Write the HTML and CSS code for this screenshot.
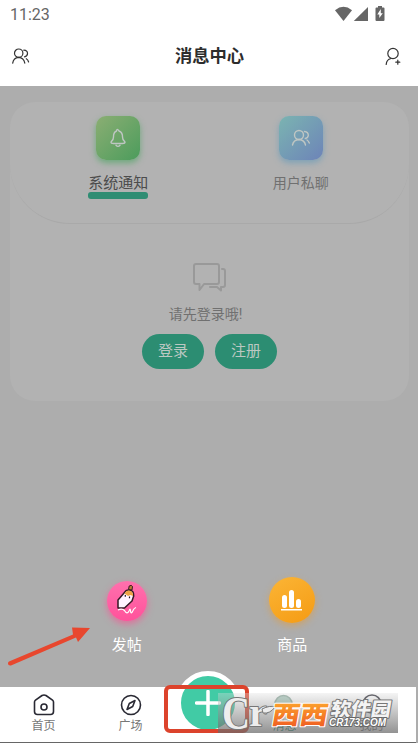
FILE: index.html
```html
<!DOCTYPE html>
<html lang="zh-CN">
<head>
<meta charset="utf-8">
<title>消息中心</title>
<link rel="stylesheet" href="styles.css">
</head>
<body>
<div class="app">
  <header class="header">
    <div class="status">
      <span>11:23</span>
      <svg class="status-icons" width="52" height="17" viewBox="0 0 52 17" fill="#666">
        <path d="M0 4.200Q8.500-2.500 17 4.200L8.500 15Z"/><path d="M33 1V15H18.800Z"/>
        <path d="M43 1.500V0h4v1.500h1.500q1 0 1 1V14q0 1-1 1h-7q-1 0-1-1V2.500q0-1 1-1Z"/>
        <path d="M45.800 3v4.200h2L44.300 12V8.500h-2Z" fill="#fff"/>
      </svg>
    </div>
    <div class="titlebar">
      <svg width="18" height="17" viewBox="0 0 18 17" class="line dark"><circle cx="6.700" cy="5.200" r="4.200"/><path d="M.7 15.200Q1.500 9.800 6.700 9.400Q11.800 9.800 12.800 15.200M11.800 2.200Q15.500 2.500 15.500 5.500Q15.500 8.200 12.500 8.800M14.300 10.700Q16 11.600 16.600 14"/></svg>
      <h1>消息中心</h1>
      <svg width="18" height="19" viewBox="0 0 18 19" class="line dark"><circle cx="8" cy="6.500" r="5.200"/><path d="M1.200 17.500Q1.500 12.500 6 11.500M12.800 13.200v4M10.800 15.200h4"/></svg>
    </div>
  </header>
  <main class="main">
    <section class="card">
      <div class="tabs">
        <div class="tab active">
          <div class="tile green"><svg width="18" height="20" viewBox="0 0 18 20" class="line pale"><path d="M7.500 3Q8-.2 10 3Q13.700 4.500 13.500 9Q13.400 12 16 14Q16 15.500 13.500 15.500H4.500Q2 15.500 2 14Q4.600 12 4.500 9Q4.300 4.500 7.500 3M7 17.300Q9 19.500 11 17.300"/></svg></div>
          <span>系统通知</span>
          <i class="underline"></i>
        </div>
        <div class="tab">
          <div class="tile blue"><svg width="20" height="18" viewBox="0 0 20 18" class="line pale"><circle cx="8" cy="6" r="4.500"/><path d="M1.500 16Q2.500 10.800 8 10.500Q13.500 11 14.500 16M13.500 2.500Q17.500 3 17.300 6.500Q17 9 14.300 9.500M16 11Q17.500 12 18.300 14"/></svg></div>
          <span>用户私聊</span>
        </div>
      </div>
      <div class="empty">
        <svg width="34" height="30" viewBox="0 0 34 30"><path d="M3 1H24Q26 1 26 3V19Q26 21 24 21H11L6.500 27V21H3Q1 21 1 19V3Q1 1 3 1ZM29 6H30Q32 6 32 8V22Q32 24 30 24H28V27.500L24 24H17"/></svg>
        <p>请先登录哦!</p>
        <div class="buttons"><button>登录</button><button>注册</button></div>
      </div>
    </section>
    <div class="actions">
      <div class="action">
        <div class="disc pink"><svg width="40" height="40" viewBox="0 0 40 40"><path d="M11 19L17.500 11.500Q19 8.500 22.500 9Q27 9.500 26.700 15L25 20L17.500 27H11Z" fill="#fff2ff" stroke="#351824" stroke-width="1.500" stroke-linejoin="round"/><path d="M17.500 13Q19 9 23 9.700Q26.500 11 26 15L23.500 14L21 15L19 13.500Z" fill="#eda345"/><path d="M21.500 8.500L22.200 5Q24.500 3.500 25.500 5.500L25 9Z" fill="#b97a32" stroke="#351824"/><path d="M18.300 14v1.800M22.500 15.500v1.800" stroke="#201820" stroke-width="1.200"/><path d="M11 29Q15 27 17.500 29.500Q20 34 22 30Q23.500 26 23.500 30Q24 34 26 29.500Q27 27 29 26.500" fill="none" stroke="#fff" stroke-width="1.200"/></svg></div>
        <span>发帖</span>
      </div>
      <div class="action goods">
        <div class="disc orange"><svg width="22" height="22" viewBox="0 0 22 22" fill="#fff"><rect x="1" y="6" width="5" height="13" rx="2.500"/><rect x="8" y="1" width="5" height="18" rx="2.500"/><rect x="15" y="10" width="5" height="9" rx="2.500"/><path d="M0 20h21v1.500H0z"/></svg></div>
        <span>商品</span>
      </div>
    </div>
  </main>
  <nav class="nav">
    <div class="nav-item"><svg width="22" height="22" viewBox="0 0 22 22" class="line navicon"><path d="M1.500 8Q1.500 7 2.500 6.200L9 1.500Q11 .5 13 1.500L19.500 6.200Q20.500 7 20.500 8V17.500Q20.500 20.500 17.500 20.500H4.500Q1.500 20.500 1.500 17.500Z"/><circle cx="11" cy="13" r="3"/></svg><span>首页</span></div>
    <div class="nav-item"><svg width="22" height="22" viewBox="0 0 22 22" class="line navicon"><circle cx="11" cy="11" r="9.500"/><path d="M15 6.500L12.700 12.500L7 15.500L9.300 9.500Z"/></svg><span>广场</span></div>
    <div></div>
    <div class="nav-item current"><svg width="22" height="22" viewBox="0 0 22 22" class="line navicon"><circle cx="9.500" cy="10" r="8.500" fill="#a9c9bc"/></svg><span>消息</span></div>
    <div class="nav-item"><svg width="22" height="22" viewBox="0 0 22 22" class="line navicon"><circle cx="11" cy="10" r="9"/></svg><span>我的</span></div>
    <div class="fab"><svg width="26" height="26" viewBox="0 0 26 26"><path d="M13 1.500v23M1.500 13h23"/></svg></div>
  </nav>
  <svg class="arrow" width="84" height="42" viewBox="0 0 84 42"><path d="M2 35.500L66 8.500L65 1.500L83 2L71 16L69 11.500L4 39.500Q1 40 1 37.500Q1 36 2 35.500Z"/></svg>
  <div class="highlight"></div>
  <div class="watermark">
    <svg width="180" height="40" viewBox="0 0 180 40">
      <defs><linearGradient id="flame" x1="0" y1="0" x2="0" y2="1"><stop offset="0" stop-color="#ffb52f"/><stop offset="1" stop-color="#ee5421"/></linearGradient></defs>
      <text x="4" y="36" class="mark-c" textLength="28" lengthAdjust="spacingAndGlyphs">C</text>
      <text x="31" y="33" class="mark-r" textLength="18" lengthAdjust="spacingAndGlyphs">r</text>
      <path d="M44 16Q52 12 57 14Q52 21 45 20Z" class="leaf"/>
      <text x="53" y="31" class="mark-west" transform="translate(5 0) skewX(-10)" textLength="56" lengthAdjust="spacingAndGlyphs">西西</text>
      <text x="112" y="23" class="mark-name" transform="translate(4 0) skewX(-10)" textLength="60" lengthAdjust="spacingAndGlyphs">软件园</text>
      <text x="111" y="33" class="mark-url" textLength="57" lengthAdjust="spacingAndGlyphs">CR173.COM</text>
    </svg>
  </div>
</div>
</body>
</html>
```
FILE: styles.css
```css
* { box-sizing: border-box; }
body { margin: 0; background: #adadad; font-family: Roboto, "Noto Sans CJK SC", sans-serif; }
.app { position: relative; width: 418px; height: 743px; overflow: hidden; display: flex; flex-direction: column; }
.header { height: 86px; background: #fff; flex: none; }
.status { height: 28px; padding: 6px 32px 0 10px; display: flex; justify-content: space-between; color: #666; font-size: 16px; line-height: 18px; }
.status-icons { margin-right: -1px; }
.titlebar { height: 56px; padding: 0 15px 0 12px; display: flex; align-items: center; justify-content: space-between; }
h1 { margin: 0 0 0 4px; font-size: 17.300px; line-height: 24px; font-weight: 700; color: #2d2d2d; }
.line { fill: none; stroke-width: 1.200; stroke-linecap: round; stroke-linejoin: round; }
.dark { stroke: #333; }
.pale { stroke: #bfc6c3; stroke-width: 1.400; }
.main { flex: 1; padding: 16px 9px 0 10px; display: flex; flex-direction: column; background: #adadad; }
.card { height: 299px; border-radius: 25px; background: #b2b2b2; flex: none; }
.tabs { height: 122px; border-radius: 25px 25px 60px 60px; border-bottom: 1px solid #a9a9a9; display: flex; padding: 14px 17px 0; }
.tab { flex: 1; display: flex; flex-direction: column; align-items: center; font-size: 14px; line-height: 20px; color: #707070; }
.tab span { margin-top: 13px; }
.tab.active span { margin-top: 14px; font-size: 15px; line-height: 18px; color: #4c4c4c; }
.tile { width: 44px; height: 44px; border-radius: 10px; display: flex; align-items: center; justify-content: center; }
.green { background: linear-gradient(135deg, #8bae73, #4c9c5c); box-shadow: 0 3px 6px #6da97b; }
.blue { background: linear-gradient(135deg, #7bb4b1, #6d84b8); box-shadow: 0 3px 6px #7ea2b7; }
.underline { width: 60px; height: 7px; border-radius: 3px; background: #2f8d73; }
.empty { display: flex; flex-direction: column; align-items: center; padding-top: 39px; }
.empty > svg { fill: none; stroke: #999; stroke-width: 2; stroke-linejoin: round; stroke-linecap: round; }
.empty p { margin: 11px 0 10px; font-size: 14px; line-height: 20px; color: #707070; padding-right: 8px; }
.buttons { display: flex; gap: 11px; }
button { width: 62px; height: 35px; border: 0; border-radius: 18px; padding: 0 0 2px; background: #2c8d72; color: #bbc8c2; font: 15px/20px Roboto, "Noto Sans CJK SC", sans-serif; }
.actions { display: flex; padding: 176px 34px 0 34px; }
.action { flex: 1; display: flex; flex-direction: column; align-items: center; color: #fff; font-size: 15px; line-height: 22px; }
.disc { width: 46px; height: 46px; border-radius: 50%; display: flex; align-items: center; justify-content: center; }
.action span { margin-top: 11px; }
.pink { width: 40px; height: 40px; margin: 4px 0 2px; background: linear-gradient(#ff70ad, #ff529b); box-shadow: 0 3px 7px #df719c; }
.orange { background: linear-gradient(150deg, #fbb536, #f59b13); box-shadow: 0 3px 7px #cda36a; }
.nav { position: relative; height: 56px; margin-right: 2px; padding-top: 7px; background: #fff; border-bottom: 1px solid #666; display: grid; grid-template-columns: 87px 87px 67px 87px 87px; flex: none; }
.nav-item { display: flex; flex-direction: column; align-items: center; font-size: 12px; line-height: 18px; color: #777; }
.nav-item span { margin-top: 1px; }
.navicon { stroke: #292933; stroke-width: 1.600; }
.current { color: #23886d; }
.current .navicon { stroke: #8aa79b; }
.fab { position: absolute; top: -16px; left: 176px; width: 64px; height: 64px; border: 5px solid #fff; border-radius: 50%; background: #41cba5; display: flex; align-items: center; justify-content: center; }
.fab svg { fill: none; stroke: #fff; stroke-width: 3.500; stroke-linecap: round; }
.arrow { position: absolute; left: 7px; top: 626px; fill: #e8472e; }
.highlight { position: absolute; left: 164px; top: 685px; width: 85px; height: 48px; border: 4px solid #dc432c; border-radius: 6px; }
.watermark { position: absolute; left: 218px; top: 693px; width: 180px; height: 40px; background: linear-gradient(rgba(225,225,225,.35), rgba(105,105,105,.72)); }
.watermark svg { display: block; overflow: visible; }
.watermark text { paint-order: stroke; stroke-linejoin: round; }
.mark-c, .mark-r { font: 700 46px "Liberation Serif", serif; fill: #ededed; stroke: #777; stroke-width: 2px; }
.mark-r { font-size: 42px; }
.leaf { fill: #ededed; stroke: #777; }
.mark-west { font: 900 25px "Noto Sans CJK SC", sans-serif; fill: url(#flame); stroke: #fff; stroke-width: 2px; }
.mark-name { font: 900 19px "Noto Sans CJK SC", sans-serif; fill: #f3f3f3; stroke: #777; stroke-width: 2px; }
.mark-url { font: italic 700 10.500px "Liberation Sans", sans-serif; fill: #fff; stroke: #666; stroke-width: 2px; }
```
